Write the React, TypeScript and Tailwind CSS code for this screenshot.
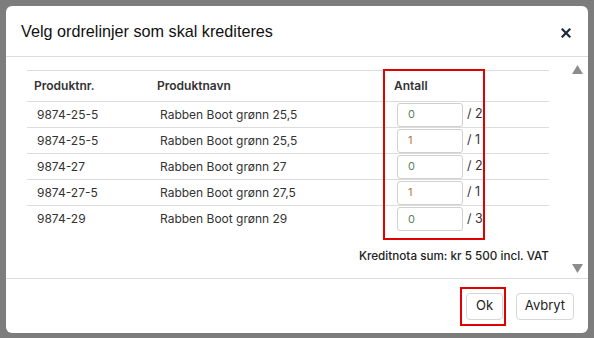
const rows = [
  { nr: "9874-25-5", name: "Rabben Boot grønn 25,5", qty: "0", max: 2 },
  { nr: "9874-25-5", name: "Rabben Boot grønn 25,5", qty: "1", max: 1 },
  { nr: "9874-27", name: "Rabben Boot grønn 27", qty: "0", max: 2 },
  { nr: "9874-27-5", name: "Rabben Boot grønn 27,5", qty: "1", max: 1 },
  { nr: "9874-29", name: "Rabben Boot grønn 29", qty: "0", max: 3 },
];

export default function App() {
  return (
    <div
      className="w-[594px] h-[338px] bg-[#7d7d7d] pt-[6px] pl-[6px] overflow-hidden"
      style={{ fontFamily: "Inter, 'Noto Sans', sans-serif" }}
    >
      <div className="relative w-[582px] h-[327px] bg-white rounded-[6px] flex flex-col text-[#333]">
        {/* Header */}
        <div className="h-[51px] flex items-center justify-between pl-[15px] pr-[17px] border-b border-[#dcdcdc] shrink-0">
          <h2 className="text-[16.2px] text-[#111] mt-[1px] font-['Liberation_Sans',Arial,sans-serif]">
            Velg ordrelinjer som skal krediteres
          </h2>
          <svg width="10" height="10" viewBox="0 0 10 10" className="mt-[4px]">
            <path d="M1.5 1.5 L8.5 8.5 M8.5 1.5 L1.5 8.5" stroke="#1c2a3a" strokeWidth="2.2" strokeLinecap="square" />
          </svg>
        </div>

        {/* Body */}
        <div className="flex h-[221px] shrink-0">
          <div className="flex-1 pl-[21px] pt-[13px]">
            <div className="w-[522px] border-t border-[#dcdcdc] text-[12px]">
              <div className="flex h-[31px] items-center border-b border-[#dcdcdc] font-semibold text-[#333]">
                <div className="w-[130px] pl-[7px]">Produktnr.</div>
                <div className="w-[230px]">Produktnavn</div>
                <div className="pl-[7px]">Antall</div>
              </div>
              {rows.map((r, i) => (
                <div
                  key={i}
                  className={
                    "flex h-[26px] items-center text-[#333] " +
                    (i < rows.length - 1 ? "border-b border-[#dcdcdc]" : "")
                  }
                >
                  <div className="w-[130px] pl-[10px]">{r.nr}</div>
                  <div className="w-[230px] pl-[3px]">{r.name}</div>
                  <div className="flex items-center pl-[10px]">
                    <div
                      className={
                        "w-[66px] h-[24px] border border-[#d0d0d0] rounded-[3px] pl-[10px] flex items-center text-[11px] " +
                        (r.qty === "0" ? "text-[#5d7f5d]" : "text-[#b0783a]")
                      }
                    >
                      {r.qty}
                    </div>
                    <span className="ml-[4px] text-[12.5px] text-[#333]">/ {r.max}</span>
                  </div>
                </div>
              ))}
            </div>
            <div className="w-[522px] text-right text-[11.7px] font-medium text-[#222] mt-[16px]">
              Kreditnota sum: kr 5 500 incl. VAT
            </div>
          </div>
          <div className="w-[26px] flex flex-col justify-between items-start pl-[10px] pt-[8px] pb-[5px]">
            <svg width="11" height="9" viewBox="0 0 11 9">
              <path d="M5.5 0 L11 9 L0 9 Z" fill="#8c8c8c" />
            </svg>
            <svg width="11" height="9" viewBox="0 0 11 9">
              <path d="M0 0 L11 0 L5.5 9 Z" fill="#8c8c8c" />
            </svg>
          </div>
        </div>

        {/* Footer */}
        <div className="flex-1 border-t border-[#dcdcdc] flex items-center justify-end gap-[13px] pr-[14px]">
          <button className="w-[37px] h-[27px] border border-[#d6d6d6] rounded-[4px] text-[13px] text-[#222] bg-white">
            Ok
          </button>
          <button className="w-[58px] h-[27px] border border-[#d6d6d6] rounded-[4px] text-[13px] text-[#222] bg-white">
            Avbryt
          </button>
        </div>

        {/* annotation boxes */}
        <div className="absolute left-[377px] top-[63px] w-[102px] h-[171px] border-2 border-[#e00000]" />
        <div className="absolute left-[454px] top-[281px] w-[46px] h-[39px] border-2 border-[#e00000]" />
      </div>
    </div>
  );
}
